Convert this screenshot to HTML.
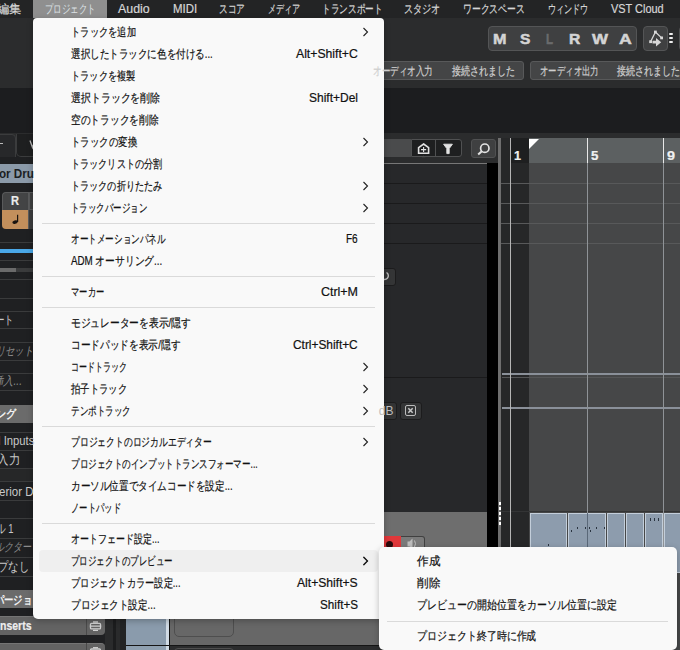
<!DOCTYPE html><html lang="ja"><head><meta charset="utf-8"><style>
html,body{margin:0;padding:0;width:680px;height:650px;overflow:hidden;background:#1f2022}
#root div{position:absolute} #root span{position:absolute;white-space:nowrap;font-family:'Liberation Sans', sans-serif;transform-origin:0 50%}
</style></head><body><div id="root" style="position:relative;width:680px;height:650px;overflow:hidden">
<div style="left:0px;top:0px;width:680px;height:650px;background:#1f2022;"></div>
<div style="left:0px;top:0px;width:680px;height:18px;background:#232425;"></div>
<div style="left:33px;top:0px;width:74px;height:18px;background:#8f8f8f;"></div>
<div style="left:0px;top:18px;width:680px;height:70px;background:#2b2c2d;"></div>
<div style="left:488px;top:26px;width:149px;height:25px;background:#3f4041;border:1px solid #545556;box-sizing:border-box;border-radius:4px"></div>
<div style="left:643px;top:26px;width:25px;height:25px;background:#3f4041;border:1px solid #545556;box-sizing:border-box;border-radius:4px"></div>
<svg style="position:absolute;left:643px;top:26px" width="25" height="25" viewBox="643 26 25 25"><g fill="#d8d8d8" stroke="#d8d8d8"><path d="M655.4 32 L661.6 37.9 M655.4 32 L650.6 41.7" stroke-width="1.3" fill="none"/><rect x="654" y="30.6" width="2.8" height="2.8" stroke="none"/><rect x="660.2" y="36.5" width="2.8" height="2.8" stroke="none"/><rect x="649.2" y="40.3" width="2.8" height="2.8" stroke="none"/><path d="M652.5 40.8 L656 40.8 L656 38 L661.2 42.2 L656 46.6 L656 43.6 L652.5 43.6 Z" stroke="none"/></g></svg>
<div style="left:669.3px;top:33px;width:3.6px;height:2px;background:#eeeeee;border-radius:1px"></div>
<div style="left:669.3px;top:37.2px;width:3.6px;height:2px;background:#eeeeee;border-radius:1px"></div>
<div style="left:669.3px;top:41.1px;width:3.6px;height:2px;background:#eeeeee;border-radius:1px"></div>
<div style="left:679px;top:26px;width:10px;height:25px;background:#3a3b3c;border:1px solid #505152;box-sizing:border-box;border-radius:4px"></div>
<div style="left:300px;top:61px;width:224px;height:19px;background:#444546;border:1px solid #58595a;box-sizing:border-box;border-radius:3px"></div>
<div style="left:530px;top:61px;width:170px;height:19px;background:#444546;border:1px solid #58595a;box-sizing:border-box;border-radius:3px"></div>
<div style="left:0px;top:88px;width:680px;height:44.5px;background:#1c1d1f;"></div>
<div style="left:0px;top:132.5px;width:680px;height:6px;background:#2b2c2d;"></div>
<div style="left:384px;top:138px;width:114px;height:25px;background:#2b2c2d;"></div>
<div style="left:384px;top:139px;width:27px;height:18px;background:#4a4b4c;"></div>
<div style="left:410.5px;top:139px;width:51px;height:18px;background:#1e1f20;border:1px solid #505152;box-sizing:border-box;border-radius:0 3px 3px 0"></div>
<div style="left:435px;top:139px;width:1px;height:18px;background:#505152;"></div>
<div style="left:471px;top:139px;width:25px;height:18.5px;background:#3f4041;border:1px solid #505152;box-sizing:border-box;border-radius:3px"></div>
<div style="left:384px;top:162.5px;width:114px;height:1px;background:#777;"></div>
<svg style="position:absolute;left:405px;top:135px" width="95" height="30" viewBox="405 135 95 30"><g fill="none" stroke="#e2e2e2" stroke-width="1.6"><path d="M423.6 144 L428.6 147.6 L428.6 153.2 L418.6 153.2 L418.6 147.6 Z"/><path d="M423.6 147 L423.6 152 M421 149.6 L426.2 149.6" stroke-width="1.1"/><path d="M443.6 144.2 L452.4 144.2 L449.2 148.6 L449.2 153.6 L446.8 153.6 L446.8 148.6 Z" fill="#e2e2e2" stroke-width="0.9"/><circle cx="484.8" cy="148.2" r="4.2" stroke-width="1.7"/><path d="M481.8 151.2 L478.2 154.6" stroke-width="2"/></g><path d="M421.8 157.3 L423.6 155.6 L425.4 157.3 Z" fill="#505152"/></svg>
<div style="left:384px;top:163.5px;width:103px;height:348px;background:#27282a;"></div>
<div style="left:384px;top:183px;width:114px;height:1px;background:#1a1a1b;"></div>
<div style="left:384px;top:203px;width:114px;height:1px;background:#1a1a1b;"></div>
<div style="left:384px;top:223px;width:114px;height:1px;background:#1a1a1b;"></div>
<div style="left:384px;top:243px;width:114px;height:1px;background:#1a1a1b;"></div>
<div style="left:384px;top:377px;width:114px;height:1px;background:#1a1a1b;"></div>
<div style="left:384px;top:511.5px;width:103px;height:1px;background:#1a1a1b;"></div>
<div style="left:384px;top:512px;width:103px;height:40px;background:#6e6e6e;"></div>
<div style="left:384px;top:535.5px;width:17px;height:14px;background:#e0373a;border-radius:0 0 0 0"></div>
<div style="left:385.5px;top:540.5px;width:7px;height:7px;border-radius:50%;background:#2a0a0b"></div>
<div style="left:401px;top:535.5px;width:23.5px;height:14px;background:#7a7a7a;border:1px solid #404040;border-left:none;box-sizing:border-box;border-radius:0 3px 0 0"></div>
<svg style="position:absolute;left:401px;top:535px" width="24" height="14" viewBox="401 535 24 14"><path d="M407.5 541.5 L409.5 541.5 L412.5 538.5 L412.5 549 L409.5 546.5 L407.5 546.5 Z" fill="#bdbdbd"/><path d="M414.5 540.5 Q416.5 543.5 414.5 547" fill="none" stroke="#bdbdbd" stroke-width="1"/></svg>
<div style="left:487px;top:511px;width:11px;height:1px;background:#333;"></div>
<div style="left:376px;top:267.5px;width:19.5px;height:18px;background:#343536;border:1px solid #1c1c1d;box-sizing:border-box;border-radius:3px"></div>
<div style="left:370px;top:401.5px;width:27px;height:18px;background:#323334;border:1px solid #1c1c1d;box-sizing:border-box;border-radius:3px"></div>
<div style="left:399.5px;top:401.5px;width:22px;height:18px;background:#343536;border:1px solid #1c1c1d;box-sizing:border-box;border-radius:3px"></div>
<div style="left:405px;top:405px;width:11px;height:11px;border:1.5px solid #bbb;box-sizing:border-box;border-radius:2px"></div>
<svg style="position:absolute;left:405px;top:405px" width="11" height="11" viewBox="0 0 11 11"><path d="M3.3 3.3 L7.7 7.7 M7.7 3.3 L3.3 7.7" stroke="#c8c8c8" stroke-width="1.5"/></svg>
<svg style="position:absolute;left:376px;top:267px" width="20" height="19" viewBox="376 267 20 19"><path d="M386.5 272.5 A3.8 3.8 0 1 1 383 272.3" fill="none" stroke="#bdbdbd" stroke-width="1.4"/></svg>
<div style="left:487px;top:163px;width:11px;height:487px;background:#000;"></div>
<div style="left:498px;top:138px;width:3px;height:512px;background:#6e6e6e;"></div>
<div style="left:498.5px;top:502px;width:2px;height:3px;background:#fff;"></div>
<div style="left:498.5px;top:507px;width:2px;height:3px;background:#fff;"></div>
<div style="left:498.5px;top:512px;width:2px;height:3px;background:#fff;"></div>
<div style="left:498.5px;top:517px;width:2px;height:3px;background:#fff;"></div>
<div style="left:498.5px;top:522px;width:2px;height:3px;background:#fff;"></div>
<div style="left:501px;top:163px;width:28px;height:487px;background:#262728;"></div>
<div style="left:529px;top:163px;width:151px;height:487px;background:#464748;"></div>
<div style="left:501px;top:183px;width:179px;height:1px;background:#58595a;"></div>
<div style="left:501px;top:203px;width:179px;height:1px;background:#58595a;"></div>
<div style="left:501px;top:223px;width:179px;height:1px;background:#58595a;"></div>
<div style="left:501px;top:243px;width:179px;height:1px;background:#58595a;"></div>
<div style="left:502px;top:373px;width:178px;height:2px;background:#8a9099;"></div>
<div style="left:502px;top:377px;width:178px;height:1px;background:#555657;"></div>
<div style="left:502px;top:407px;width:178px;height:2px;background:#8a9099;"></div>
<div style="left:501px;top:511px;width:179px;height:1px;background:#333435;"></div>
<div style="left:501px;top:138px;width:10px;height:25px;background:#262728;"></div>
<div style="left:511px;top:138px;width:18px;height:25px;background:#1e1f20;"></div>
<div style="left:529px;top:138px;width:151px;height:25px;background:#5c6061;"></div>
<div style="left:510px;top:138px;width:1px;height:512px;background:#b5b5b5;"></div>
<div style="left:587px;top:138px;width:1px;height:25px;background:#e8e8e8;"></div>
<div style="left:663px;top:138px;width:1px;height:25px;background:#e8e8e8;"></div>
<div style="left:587px;top:163px;width:1px;height:487px;background:#8f9397;"></div>
<div style="left:663px;top:163px;width:1px;height:487px;background:#8f9397;"></div>
<div style="left:529px;top:139px;width:0;height:0;border-top:10px solid #fff;border-right:10px solid transparent"></div>
<div style="left:530px;top:513px;width:37px;height:60px;background:#8d9cad;border:1px solid #c3ceda;box-sizing:border-box"></div>
<div style="left:568px;top:513px;width:38px;height:60px;background:#8d9cad;border:1px solid #c3ceda;box-sizing:border-box"></div>
<div style="left:607px;top:513px;width:18px;height:60px;background:#8d9cad;border:1px solid #c3ceda;box-sizing:border-box"></div>
<div style="left:626px;top:513px;width:18px;height:60px;background:#8d9cad;border:1px solid #c3ceda;box-sizing:border-box"></div>
<div style="left:645px;top:513px;width:18px;height:60px;background:#8d9cad;border:1px solid #c3ceda;box-sizing:border-box"></div>
<div style="left:664px;top:513px;width:26px;height:60px;background:#8d9cad;border:1px solid #c3ceda;box-sizing:border-box"></div>
<div style="left:587px;top:513px;width:1px;height:40px;background:#5a6878;"></div>
<div style="left:576.5px;top:526.5px;width:1px;height:2.5px;background:#2a3440;"></div>
<div style="left:585.3px;top:526.5px;width:1px;height:2.5px;background:#2a3440;"></div>
<div style="left:589.4px;top:526.5px;width:1px;height:2.5px;background:#2a3440;"></div>
<div style="left:595.6px;top:526.5px;width:1px;height:2.5px;background:#2a3440;"></div>
<div style="left:604.4px;top:526.5px;width:1px;height:2.5px;background:#2a3440;"></div>
<div style="left:571.2px;top:529.5px;width:1px;height:2.5px;background:#2a3440;"></div>
<div style="left:590px;top:529.5px;width:1px;height:2.5px;background:#2a3440;"></div>
<div style="left:548px;top:543.5px;width:1px;height:2.5px;background:#2a3440;"></div>
<div style="left:649.7px;top:518px;width:1px;height:2.5px;background:#2a3440;"></div>
<div style="left:653.5px;top:518px;width:1px;height:2.5px;background:#2a3440;"></div>
<div style="left:658.2px;top:518px;width:1px;height:2.5px;background:#2a3440;"></div>
<div style="left:0px;top:88px;width:33px;height:45px;background:#1c1d1f;"></div>
<div style="left:-5px;top:133.5px;width:21px;height:30px;background:#27282a;border:1px solid #3b3c3d;box-sizing:border-box;border-radius:4px 4px 0 0"></div>
<div style="left:16px;top:133.5px;width:25px;height:23px;background:#1e1f20;border:1px solid #3b3c3d;box-sizing:border-box;border-radius:0 0 0 5px;border-top:none"></div>
<div style="left:0px;top:156.5px;width:33px;height:7.5px;background:#1f2022;"></div>
<div style="left:0px;top:143px;width:2.5px;height:1.2px;background:#bbbbbb;"></div>
<svg style="position:absolute;left:28px;top:138px" width="6" height="12" viewBox="28 138 6 12"><path d="M30 140.5 L32.5 147.5 L35 140.5" fill="none" stroke="#bbbbbb" stroke-width="1.3"/></svg>
<div style="left:0px;top:164px;width:33px;height:18.5px;background:#8b9aa9;"></div>
<div style="left:0px;top:182.5px;width:33px;height:470px;background:#1f2022;"></div>
<div style="left:2px;top:191.5px;width:26.5px;height:18.5px;background:#434445;border:1px solid #595a5b;border-right:none;border-bottom:none;box-sizing:border-box;border-radius:4px 0 0 0"></div>
<div style="left:28.5px;top:191.5px;width:10px;height:18.5px;background:#3f4041;border:1px solid #595a5b;box-sizing:border-box"></div>
<div style="left:27.7px;top:191.5px;width:1px;height:37.5px;background:#5a5b5c;"></div>
<div style="left:2px;top:209.5px;width:25.8px;height:19.3px;background:#c28f5c;border-radius:0 0 0 4px"></div>
<div style="left:28.7px;top:209.5px;width:10px;height:19.3px;background:#3c3d3e;"></div>
<svg style="position:absolute;left:10px;top:212px" width="10" height="14" viewBox="10 212 10 14"><path d="M17.6 214.8 L17.6 222" stroke="#1a1410" stroke-width="1.2"/><ellipse cx="15" cy="222.1" rx="2.7" ry="1.7" transform="rotate(-15 15 222.1)" fill="#1a1410"/></svg>
<div style="left:0px;top:241.5px;width:33px;height:1px;background:#3a3b3c;"></div>
<div style="left:0px;top:259.5px;width:33px;height:1px;background:#3a3b3c;"></div>
<div style="left:0px;top:278.5px;width:33px;height:1px;background:#3a3b3c;"></div>
<div style="left:0px;top:297.5px;width:33px;height:1px;background:#3a3b3c;"></div>
<div style="left:0px;top:310.5px;width:33px;height:1px;background:#3a3b3c;"></div>
<div style="left:0px;top:328px;width:33px;height:1px;background:#3a3b3c;"></div>
<div style="left:0px;top:341.5px;width:33px;height:1px;background:#3a3b3c;"></div>
<div style="left:0px;top:359.5px;width:33px;height:1px;background:#3a3b3c;"></div>
<div style="left:0px;top:372.5px;width:33px;height:1px;background:#3a3b3c;"></div>
<div style="left:0px;top:390px;width:33px;height:1px;background:#3a3b3c;"></div>
<div style="left:0px;top:431.5px;width:33px;height:1px;background:#3a3b3c;"></div>
<div style="left:0px;top:449.5px;width:33px;height:1px;background:#3a3b3c;"></div>
<div style="left:0px;top:468px;width:33px;height:1px;background:#3a3b3c;"></div>
<div style="left:0px;top:481px;width:33px;height:1px;background:#3a3b3c;"></div>
<div style="left:0px;top:499.5px;width:33px;height:1px;background:#3a3b3c;"></div>
<div style="left:0px;top:518px;width:33px;height:1px;background:#3a3b3c;"></div>
<div style="left:0px;top:537.5px;width:33px;height:1px;background:#3a3b3c;"></div>
<div style="left:0px;top:556.5px;width:33px;height:1px;background:#3a3b3c;"></div>
<div style="left:0px;top:575.5px;width:33px;height:1px;background:#3a3b3c;"></div>
<div style="left:0px;top:249px;width:33px;height:3.5px;background:#4aa8e8;"></div>
<div style="left:0px;top:267.5px;width:16px;height:4px;background:#6a6a6a;"></div>
<div style="left:16px;top:267.5px;width:17px;height:4px;background:#3a3b3c;"></div>
<div style="left:0px;top:404.5px;width:33px;height:18px;background:#6b6b6b;"></div>
<div style="left:0px;top:468.5px;width:33px;height:12.5px;background:#262728;"></div>
<div style="left:0px;top:589.5px;width:33px;height:18.5px;background:#6b6b6b;"></div>
<div style="left:-5px;top:616px;width:109.5px;height:19px;background:#636363;border-top:1px solid #747474;box-sizing:border-box;border-radius:0 4px 4px 0"></div>
<div style="left:85.5px;top:615.5px;width:1px;height:19.5px;background:#4a4a4a;"></div>
<div style="left:-5px;top:643px;width:109.5px;height:20px;background:#636363;border-top:1px solid #747474;box-sizing:border-box;border-radius:0 4px 4px 0"></div>
<div style="left:85.5px;top:643px;width:1px;height:20px;background:#4a4a4a;"></div>
<svg style="position:absolute;left:88px;top:618px" width="16" height="32" viewBox="88 618 16 32"><g fill="none" stroke="#d0d0d0" stroke-width="1.3"><rect x="90.5" y="623.3" width="10" height="5.6" rx="1"/><path d="M89.8 626.1 L101.2 626.1 M93 622 L98 622 M93 630.3 L98 630.3"/><rect x="90.5" y="649" width="10" height="5.6" rx="1"/><path d="M93 647.7 L98 647.7"/></g></svg>
<div style="left:104.5px;top:618px;width:8.5px;height:32px;background:#2a2b2c;"></div>
<div style="left:113px;top:618px;width:3px;height:32px;background:#1c1d1e;"></div>
<div style="left:116px;top:618px;width:4px;height:32px;background:#2a2b2c;"></div>
<div style="left:120px;top:618px;width:6px;height:32px;background:#222324;"></div>
<div style="left:126px;top:618px;width:40px;height:27px;background:#8a9bac;"></div>
<div style="left:126px;top:646px;width:40px;height:10px;background:#8fa0b0;"></div>
<div style="left:166px;top:618px;width:3px;height:32px;background:#d0dae4;"></div>
<div style="left:169px;top:618px;width:1px;height:32px;background:#111;"></div>
<div style="left:170px;top:618px;width:214px;height:27px;background:#676767;"></div>
<div style="left:126px;top:645px;width:258px;height:1px;background:#151515;"></div>
<div style="left:170px;top:646px;width:214px;height:10px;background:#2b2c2d;"></div>
<div style="left:173.5px;top:600px;width:60px;height:37px;background:transparent;border:1px solid #4e4e4e;box-sizing:border-box;border-radius:5px"></div>
<div style="left:173.5px;top:648px;width:60px;height:10px;background:transparent;border:1px solid #4e4e4e;box-sizing:border-box;border-radius:4px"></div>
<div style="left:33px;top:18px;width:351px;height:600.5px;background:#f9f9f9;border-radius:4px 4px 5px 5px;box-shadow:0 2px 6px rgba(0,0,0,0.25)"></div>
<div style="left:39px;top:550px;width:339px;height:22px;background:#efefef;border-radius:4px"></div>
<div style="left:42px;top:222.6px;width:333px;height:1px;background:#dadada;"></div>
<div style="left:42px;top:275.6px;width:333px;height:1px;background:#dadada;"></div>
<div style="left:42px;top:306.6px;width:333px;height:1px;background:#dadada;"></div>
<div style="left:42px;top:425.6px;width:333px;height:1px;background:#dadada;"></div>
<div style="left:42px;top:522.6px;width:333px;height:1px;background:#dadada;"></div>
<div style="left:378.5px;top:547px;width:298.5px;height:102.5px;background:#f9f9f9;border-radius:5px;box-shadow:0 2px 6px rgba(0,0,0,0.25)"></div>
<div style="left:387px;top:620.5px;width:281px;height:1px;background:#dadada;"></div>
<svg style="position:absolute;left:362px;top:27.3px" width="8" height="10" viewBox="0 0 8 10"><path d="M1.5 1 L5.5 5 L1.5 9" fill="none" stroke="#222" stroke-width="1.1"/></svg>
<svg style="position:absolute;left:362px;top:137.29999999999998px" width="8" height="10" viewBox="0 0 8 10"><path d="M1.5 1 L5.5 5 L1.5 9" fill="none" stroke="#222" stroke-width="1.1"/></svg>
<svg style="position:absolute;left:362px;top:181.29999999999998px" width="8" height="10" viewBox="0 0 8 10"><path d="M1.5 1 L5.5 5 L1.5 9" fill="none" stroke="#222" stroke-width="1.1"/></svg>
<svg style="position:absolute;left:362px;top:203.29999999999998px" width="8" height="10" viewBox="0 0 8 10"><path d="M1.5 1 L5.5 5 L1.5 9" fill="none" stroke="#222" stroke-width="1.1"/></svg>
<svg style="position:absolute;left:362px;top:362.3px" width="8" height="10" viewBox="0 0 8 10"><path d="M1.5 1 L5.5 5 L1.5 9" fill="none" stroke="#222" stroke-width="1.1"/></svg>
<svg style="position:absolute;left:362px;top:384.3px" width="8" height="10" viewBox="0 0 8 10"><path d="M1.5 1 L5.5 5 L1.5 9" fill="none" stroke="#222" stroke-width="1.1"/></svg>
<svg style="position:absolute;left:362px;top:406.3px" width="8" height="10" viewBox="0 0 8 10"><path d="M1.5 1 L5.5 5 L1.5 9" fill="none" stroke="#222" stroke-width="1.1"/></svg>
<svg style="position:absolute;left:362px;top:437.3px" width="8" height="10" viewBox="0 0 8 10"><path d="M1.5 1 L5.5 5 L1.5 9" fill="none" stroke="#222" stroke-width="1.1"/></svg>
<svg style="position:absolute;left:362px;top:556.3000000000001px" width="8" height="10" viewBox="0 0 8 10"><path d="M1.5 1 L5.5 5 L1.5 9" fill="none" stroke="#222" stroke-width="1.1"/></svg>
<svg style="position:absolute;left:362px;top:556.3000000000001px" width="8" height="10" viewBox="0 0 8 10"><path d="M1.5 1 L5.5 5 L1.5 9" fill="none" stroke="#222" stroke-width="1.1"/></svg>
<span id="t0" style="left:-3px;top:-0.30px;font-size:12px;line-height:18px;color:#d6d6d6;font-weight:normal;-webkit-text-stroke:0.2px;transform:scaleX(1.0208);">編集</span>
<span id="t1" style="left:45.2px;top:-0.30px;font-size:12px;line-height:18px;color:#dde2e6;font-weight:normal;transform:scaleX(0.7056);">プロジェクト</span>
<span id="t2" style="left:118px;top:-0.30px;font-size:12px;line-height:18px;color:#d6d6d6;font-weight:normal;-webkit-text-stroke:0.2px;transform:scaleX(1.0325);">Audio</span>
<span id="t3" style="left:172.8px;top:-0.30px;font-size:12px;line-height:18px;color:#d6d6d6;font-weight:normal;-webkit-text-stroke:0.2px;transform:scaleX(0.9549);">MIDI</span>
<span id="t4" style="left:218.8px;top:-0.30px;font-size:12px;line-height:18px;color:#d6d6d6;font-weight:normal;-webkit-text-stroke:0.2px;transform:scaleX(0.7222);">スコア</span>
<span id="t5" style="left:267.6px;top:-0.30px;font-size:12px;line-height:18px;color:#d6d6d6;font-weight:normal;-webkit-text-stroke:0.2px;transform:scaleX(0.6750);">メディア</span>
<span id="t6" style="left:322px;top:-0.30px;font-size:12px;line-height:18px;color:#d6d6d6;font-weight:normal;-webkit-text-stroke:0.2px;transform:scaleX(0.7190);">トランスポート</span>
<span id="t7" style="left:404.4px;top:-0.30px;font-size:12px;line-height:18px;color:#d6d6d6;font-weight:normal;-webkit-text-stroke:0.2px;transform:scaleX(0.7625);">スタジオ</span>
<span id="t8" style="left:463px;top:-0.30px;font-size:12px;line-height:18px;color:#d6d6d6;font-weight:normal;-webkit-text-stroke:0.2px;transform:scaleX(0.7357);">ワークスペース</span>
<span id="t9" style="left:547.8px;top:-0.30px;font-size:12px;line-height:18px;color:#d6d6d6;font-weight:normal;-webkit-text-stroke:0.2px;transform:scaleX(0.6767);">ウィンドウ</span>
<span id="t10" style="left:611.4px;top:-0.30px;font-size:12px;line-height:18px;color:#d6d6d6;font-weight:normal;-webkit-text-stroke:0.2px;transform:scaleX(0.9098);">VST Cloud</span>
<span id="t11" style="left:71.3px;top:21.10px;font-size:12px;line-height:22px;color:#111;font-weight:normal;-webkit-text-stroke:0.2px;transform:scaleX(0.7732);">トラックを追加</span>
<span id="t12" style="left:71.3px;top:43.10px;font-size:12px;line-height:22px;color:#111;font-weight:normal;-webkit-text-stroke:0.2px;transform:scaleX(0.7960);">選択したトラックに色を付ける...</span>
<span id="t13" style="left:296.2px;top:43.40px;font-size:12px;line-height:22px;color:#111;font-weight:normal;-webkit-text-stroke:0.2px;transform:scaleX(1.0181);">Alt+Shift+C</span>
<span id="t14" style="left:71.3px;top:65.10px;font-size:12px;line-height:22px;color:#111;font-weight:normal;-webkit-text-stroke:0.2px;transform:scaleX(0.7702);">トラックを複製</span>
<span id="t15" style="left:71.3px;top:87.10px;font-size:12px;line-height:22px;color:#111;font-weight:normal;-webkit-text-stroke:0.2px;transform:scaleX(0.8259);">選択トラックを削除</span>
<span id="t16" style="left:309px;top:87.40px;font-size:12px;line-height:22px;color:#111;font-weight:normal;-webkit-text-stroke:0.2px;transform:scaleX(0.9994);">Shift+Del</span>
<span id="t17" style="left:71.3px;top:109.10px;font-size:12px;line-height:22px;color:#111;font-weight:normal;-webkit-text-stroke:0.2px;transform:scaleX(0.8097);">空のトラックを削除</span>
<span id="t18" style="left:71.3px;top:131.10px;font-size:12px;line-height:22px;color:#111;font-weight:normal;-webkit-text-stroke:0.2px;transform:scaleX(0.7881);">トラックの変換</span>
<span id="t19" style="left:71.3px;top:153.10px;font-size:12px;line-height:22px;color:#111;font-weight:normal;-webkit-text-stroke:0.2px;transform:scaleX(0.7600);">トラックリストの分割</span>
<span id="t20" style="left:71.3px;top:175.10px;font-size:12px;line-height:22px;color:#111;font-weight:normal;-webkit-text-stroke:0.2px;transform:scaleX(0.7600);">トラックの折りたたみ</span>
<span id="t21" style="left:71.3px;top:197.10px;font-size:12px;line-height:22px;color:#111;font-weight:normal;-webkit-text-stroke:0.2px;transform:scaleX(0.7056);">トラックバージョン</span>
<span id="t22" style="left:71.3px;top:228.10px;font-size:12px;line-height:22px;color:#111;font-weight:normal;-webkit-text-stroke:0.2px;transform:scaleX(0.7174);">オートメーションパネル</span>
<span id="t23" style="left:346.3px;top:228.40px;font-size:12px;line-height:22px;color:#111;font-weight:normal;-webkit-text-stroke:0.2px;transform:scaleX(0.8348);">F6</span>
<span id="t24" style="left:71.3px;top:250.10px;font-size:12px;line-height:22px;color:#111;font-weight:normal;-webkit-text-stroke:0.2px;transform:scaleX(0.8142);">ADM オーサリング...</span>
<span id="t25" style="left:71.3px;top:281.10px;font-size:12px;line-height:22px;color:#111;font-weight:normal;-webkit-text-stroke:0.2px;transform:scaleX(0.6917);">マーカー</span>
<span id="t26" style="left:321px;top:281.40px;font-size:12px;line-height:22px;color:#111;font-weight:normal;-webkit-text-stroke:0.2px;transform:scaleX(1.0372);">Ctrl+M</span>
<span id="t27" style="left:71.3px;top:312.10px;font-size:12px;line-height:22px;color:#111;font-weight:normal;-webkit-text-stroke:0.2px;transform:scaleX(0.8124);">モジュレーターを表示/隠す</span>
<span id="t28" style="left:71.3px;top:334.10px;font-size:12px;line-height:22px;color:#111;font-weight:normal;-webkit-text-stroke:0.2px;transform:scaleX(0.8068);">コードパッドを表示/隠す</span>
<span id="t29" style="left:293.3px;top:334.40px;font-size:12px;line-height:22px;color:#111;font-weight:normal;-webkit-text-stroke:0.2px;transform:scaleX(0.9899);">Ctrl+Shift+C</span>
<span id="t30" style="left:71.3px;top:356.10px;font-size:12px;line-height:22px;color:#111;font-weight:normal;-webkit-text-stroke:0.2px;transform:scaleX(0.6690);">コードトラック</span>
<span id="t31" style="left:71.3px;top:378.10px;font-size:12px;line-height:22px;color:#111;font-weight:normal;-webkit-text-stroke:0.2px;transform:scaleX(0.7806);">拍子トラック</span>
<span id="t32" style="left:71.3px;top:400.10px;font-size:12px;line-height:22px;color:#111;font-weight:normal;-webkit-text-stroke:0.2px;transform:scaleX(0.7107);">テンポトラック</span>
<span id="t33" style="left:71.3px;top:431.10px;font-size:12px;line-height:22px;color:#111;font-weight:normal;-webkit-text-stroke:0.2px;transform:scaleX(0.7328);">プロジェクトのロジカルエディター</span>
<span id="t34" style="left:71.3px;top:453.10px;font-size:12px;line-height:22px;color:#111;font-weight:normal;-webkit-text-stroke:0.2px;transform:scaleX(0.7126);">プロジェクトのインプットトランスフォーマー...</span>
<span id="t35" style="left:71.3px;top:475.10px;font-size:12px;line-height:22px;color:#111;font-weight:normal;-webkit-text-stroke:0.2px;transform:scaleX(0.8004);">カーソル位置でタイムコードを設定...</span>
<span id="t36" style="left:71.3px;top:497.10px;font-size:12px;line-height:22px;color:#111;font-weight:normal;-webkit-text-stroke:0.2px;transform:scaleX(0.6972);">ノートパッド</span>
<span id="t37" style="left:71.3px;top:528.10px;font-size:12px;line-height:22px;color:#111;font-weight:normal;-webkit-text-stroke:0.2px;transform:scaleX(0.7491);">オートフェード設定...</span>
<span id="t38" style="left:71.3px;top:550.10px;font-size:12px;line-height:22px;color:#111;font-weight:normal;-webkit-text-stroke:0.2px;transform:scaleX(0.7063);">プロジェクトのプレビュー</span>
<span id="t39" style="left:71.3px;top:572.10px;font-size:12px;line-height:22px;color:#111;font-weight:normal;-webkit-text-stroke:0.2px;transform:scaleX(0.7710);">プロジェクトカラー設定...</span>
<span id="t40" style="left:297.3px;top:572.40px;font-size:12px;line-height:22px;color:#111;font-weight:normal;-webkit-text-stroke:0.2px;transform:scaleX(1.0109);">Alt+Shift+S</span>
<span id="t41" style="left:71.3px;top:594.10px;font-size:12px;line-height:22px;color:#111;font-weight:normal;-webkit-text-stroke:0.2px;transform:scaleX(0.7980);">プロジェクト設定...</span>
<span id="t42" style="left:320px;top:594.40px;font-size:12px;line-height:22px;color:#111;font-weight:normal;-webkit-text-stroke:0.2px;transform:scaleX(0.9736);">Shift+S</span>
<span id="t43" style="left:416.5px;top:550.30px;font-size:12px;line-height:22px;color:#111;font-weight:normal;-webkit-text-stroke:0.2px;transform:scaleX(0.9625);">作成</span>
<span id="t44" style="left:416.5px;top:572.10px;font-size:12px;line-height:22px;color:#111;font-weight:normal;-webkit-text-stroke:0.2px;transform:scaleX(0.9625);">削除</span>
<span id="t45" style="left:416.5px;top:593.80px;font-size:12px;line-height:22px;color:#111;font-weight:normal;-webkit-text-stroke:0.2px;transform:scaleX(0.8313);">プレビューの開始位置をカーソル位置に設定</span>
<span id="t46" style="left:416.5px;top:625.40px;font-size:12px;line-height:22px;color:#111;font-weight:normal;-webkit-text-stroke:0.2px;transform:scaleX(0.8292);">プロジェクト終了時に作成</span>
<span id="t47" style="left:493px;top:29.10px;font-size:15px;line-height:20px;color:#d4d4d4;font-weight:bold;-webkit-text-stroke:0.5px;transform:scaleX(1.0800);">M</span>
<span id="t48" style="left:519.6px;top:29.10px;font-size:15px;line-height:20px;color:#d4d4d4;font-weight:bold;-webkit-text-stroke:0.5px;transform:scaleX(1.0384);">S</span>
<span id="t49" style="left:546px;top:29.10px;font-size:15px;line-height:20px;color:#6a6b6c;font-weight:bold;-webkit-text-stroke:0.5px;transform:scaleX(0.7632);">L</span>
<span id="t50" style="left:568.7px;top:29.10px;font-size:15px;line-height:20px;color:#d4d4d4;font-weight:bold;-webkit-text-stroke:0.5px;transform:scaleX(1.0421);">R</span>
<span id="t51" style="left:592px;top:29.10px;font-size:15px;line-height:20px;color:#d4d4d4;font-weight:bold;-webkit-text-stroke:0.5px;transform:scaleX(1.1290);">W</span>
<span id="t52" style="left:618.7px;top:29.10px;font-size:15px;line-height:20px;color:#d4d4d4;font-weight:bold;-webkit-text-stroke:0.5px;transform:scaleX(1.1804);">A</span>
<span id="t53" style="left:373px;top:61.50px;font-size:12px;line-height:18px;color:#cfcfcf;font-weight:normal;-webkit-text-stroke:0.2px;transform:scaleX(0.7143);">オーディオ入力</span>
<span id="t54" style="left:451.5px;top:61.50px;font-size:12px;line-height:18px;color:#cfcfcf;font-weight:normal;-webkit-text-stroke:0.2px;transform:scaleX(0.7500);">接続されました</span>
<span id="t55" style="left:539.7px;top:61.50px;font-size:12px;line-height:18px;color:#cfcfcf;font-weight:normal;-webkit-text-stroke:0.2px;transform:scaleX(0.6988);">オーディオ出力</span>
<span id="t56" style="left:617px;top:61.50px;font-size:12px;line-height:18px;color:#cfcfcf;font-weight:normal;-webkit-text-stroke:0.2px;transform:scaleX(0.7500);">接続されました</span>
<span id="t57" style="left:514px;top:147.00px;font-size:13px;line-height:18px;color:#f0f0f0;font-weight:bold;-webkit-text-stroke:0.2px;transform:scaleX(0.9676);">1</span>
<span id="t58" style="left:591px;top:147.00px;font-size:13px;line-height:18px;color:#f0f0f0;font-weight:bold;-webkit-text-stroke:0.2px;transform:scaleX(1.0229);">5</span>
<span id="t59" style="left:667px;top:147.00px;font-size:13px;line-height:18px;color:#f0f0f0;font-weight:bold;-webkit-text-stroke:0.2px;transform:scaleX(1.1058);">9</span>
<span id="t60" style="right:646.5px;top:165.00px;font-size:13px;line-height:18px;color:#1b1e22;font-weight:bold;transform:scaleX(0.9);transform-origin:100% 50%;">or Dru</span>
<span id="t61" style="left:10.8px;top:191.90px;font-size:13px;line-height:18px;color:#ececec;font-weight:bold;-webkit-text-stroke:0.2px;transform:scaleX(0.8519);">R</span>
<span id="t62" style="right:666.4px;top:310.50px;font-size:12px;line-height:18px;color:#c8c8c8;font-weight:normal;transform:scaleX(0.8);transform-origin:100% 50%;">ート</span>
<span id="t63" style="right:647px;top:341.50px;font-size:12px;line-height:18px;color:#8a8a8a;font-weight:normal;font-style:italic;transform:scaleX(0.78);transform-origin:100% 50%;">プリセット</span>
<span id="t64" style="right:658px;top:372.00px;font-size:12px;line-height:18px;color:#8a8a8a;font-weight:normal;font-style:italic;transform:scaleX(0.85);transform-origin:100% 50%;">挿入...</span>
<span id="t65" style="right:664px;top:405.00px;font-size:12px;line-height:18px;color:#f2f2f2;font-weight:bold;transform:scaleX(0.85);transform-origin:100% 50%;">ング</span>
<span id="t66" style="right:646.2px;top:432.20px;font-size:12.5px;line-height:18px;color:#c8c8c8;font-weight:normal;transform:scaleX(0.9);transform-origin:100% 50%;">l Inputs</span>
<span id="t67" style="right:659.7px;top:451.20px;font-size:12.5px;line-height:18px;color:#c8c8c8;font-weight:normal;transform:scaleX(0.88);transform-origin:100% 50%;">入力</span>
<span id="t68" style="right:646.5px;top:482.50px;font-size:12.5px;line-height:18px;color:#c8c8c8;font-weight:normal;transform:scaleX(0.92);transform-origin:100% 50%;">erior D</span>
<span id="t69" style="right:666.4px;top:519.80px;font-size:12.5px;line-height:18px;color:#c8c8c8;font-weight:normal;transform:scaleX(0.75);transform-origin:100% 50%;">ル 1</span>
<span id="t70" style="right:649px;top:538.00px;font-size:12px;line-height:18px;color:#8a8a8a;font-weight:normal;font-style:italic;transform:scaleX(0.75);transform-origin:100% 50%;">ルクター</span>
<span id="t71" style="right:651px;top:557.50px;font-size:12.5px;line-height:18px;color:#c8c8c8;font-weight:normal;transform:scaleX(0.8);transform-origin:100% 50%;">ップなし</span>
<span id="t72" style="right:648px;top:590.50px;font-size:12px;line-height:18px;color:#f2f2f2;font-weight:bold;transform:scaleX(0.78);transform-origin:100% 50%;">パージョ</span>
<span id="t73" style="left:0px;top:617.00px;font-size:12.5px;line-height:18px;color:#eeeeee;font-weight:bold;-webkit-text-stroke:0.2px;transform:scaleX(0.8393);">nserts</span>
<span id="t74" style="right:286.5px;top:402.00px;font-size:12px;line-height:18px;color:#bdbdbd;font-weight:normal;">dB</span>
</div></body></html>
